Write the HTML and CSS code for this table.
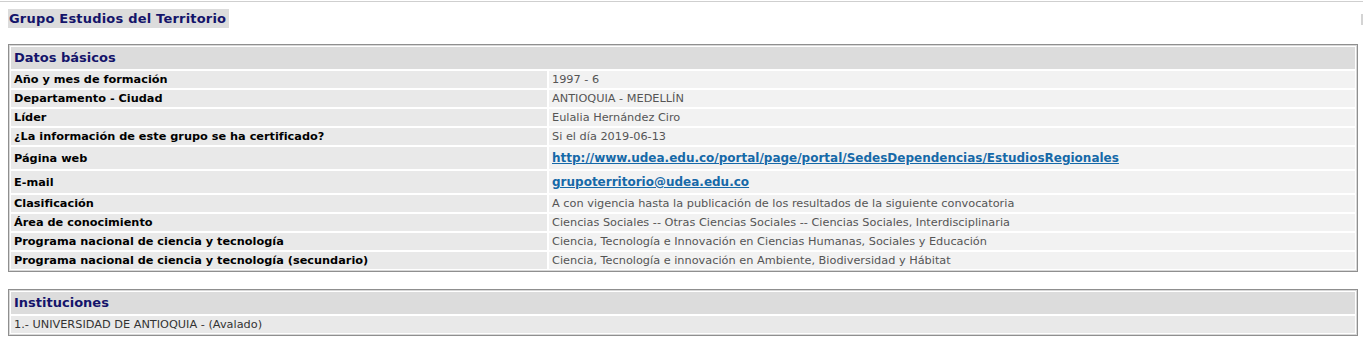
FILE: index.html
```html
<!DOCTYPE html>
<html lang="es">
<head>
<meta charset="utf-8">
<title>Grupo Estudios del Territorio</title>
<link rel="stylesheet" href="styles.css">
</head>
<body>
<div class="topline"></div>
<span class="scrollmark"></span>
<div class="page">
  <h1 class="title">Grupo Estudios del Territorio</h1>

  <table class="box" cellspacing="2">
    <tr><td class="head" colspan="2">Datos básicos</td></tr>
    <tr><td class="lbl">Año y mes de formación</td><td class="val">1997 - 6</td></tr>
    <tr><td class="lbl">Departamento - Ciudad</td><td class="val">ANTIOQUIA - MEDELLÍN</td></tr>
    <tr><td class="lbl">Líder</td><td class="val">Eulalia Hernández Ciro</td></tr>
    <tr><td class="lbl">¿La información de este grupo se ha certificado?</td><td class="val">Si el día 2019-06-13</td></tr>
    <tr><td class="lbl">Página web</td><td class="val"><a class="lnk" href="#">http://www.udea.edu.co/portal/page/portal/SedesDependencias/EstudiosRegionales</a></td></tr>
    <tr><td class="lbl">E-mail</td><td class="val"><a class="lnk" href="#">grupoterritorio@udea.edu.co</a></td></tr>
    <tr><td class="lbl">Clasificación</td><td class="val">A con vigencia hasta la publicación de los resultados de la siguiente convocatoria</td></tr>
    <tr><td class="lbl">Área de conocimiento</td><td class="val">Ciencias Sociales -- Otras Ciencias Sociales -- Ciencias Sociales, Interdisciplinaria</td></tr>
    <tr><td class="lbl">Programa nacional de ciencia y tecnología</td><td class="val">Ciencia, Tecnología e Innovación en Ciencias Humanas, Sociales y Educación</td></tr>
    <tr><td class="lbl">Programa nacional de ciencia y tecnología (secundario)</td><td class="val">Ciencia, Tecnología e innovación en Ambiente, Biodiversidad y Hábitat</td></tr>
  </table>

  <table class="box box2" cellspacing="2">
    <tr><td class="head">Instituciones</td></tr>
    <tr><td class="inst">1.- UNIVERSIDAD DE ANTIOQUIA - (Avalado)</td></tr>
  </table>
</div>
</body>
</html>
```
FILE: styles.css
```css
html, body {
  margin: 0;
  padding: 0;
  background: #ffffff;
  font-family: "DejaVu Sans", Verdana, sans-serif;
}

.topline {
  height: 1px;
  margin-top: 1px;
  margin-right: 2px;
  background: #cfcfcf;
}

.scrollmark {
  position: absolute;
  left: 1361px;
  top: 14px;
  width: 2px;
  height: 11px;
  background: #d4d4d4;
}

.page {
  padding: 7px 7px 0 8px;
}

.title {
  display: block;
  width: max-content;
  margin: 0;
  padding: 2px 3px 2px 1px;
  height: 15px;
  line-height: 15px;
  font-size: 13px;
  letter-spacing: 0.2px;
  font-weight: bold;
  color: #14146a;
  background: #dcdcdc;
}

.box {
  width: 1350px;
  margin-top: 16px;
  border: 1px solid #8f8f8f;
  box-shadow: inset 0 0 0 1px #d8d8d8;
  padding: 0;
  border-collapse: separate;
  border-spacing: 2px;
}

.box2 {
  margin-top: 17px;
}

.box td {
  padding: 2px 3px;
  font-size: 11.3px;
  line-height: 13px;
  vertical-align: middle;
}

.box td.head {
  background: #dcdcdc;
  color: #14146a;
  font-size: 13px;
  font-weight: bold;
  line-height: 18px;
  padding: 2px 3px;
}

.lbl {
  width: 530px;
  background: #e9e9e9;
  color: #000000;
  font-weight: bold;
}

.val {
  background: #f2f2f2;
  color: #555555;
}

.inst {
  background: #e9e9e9;
  color: #333333;
}

.lnk {
  color: #1669a8;
  font-size: 12px;
  font-weight: bold;
  line-height: 18px;
  text-decoration: underline;
}
```
